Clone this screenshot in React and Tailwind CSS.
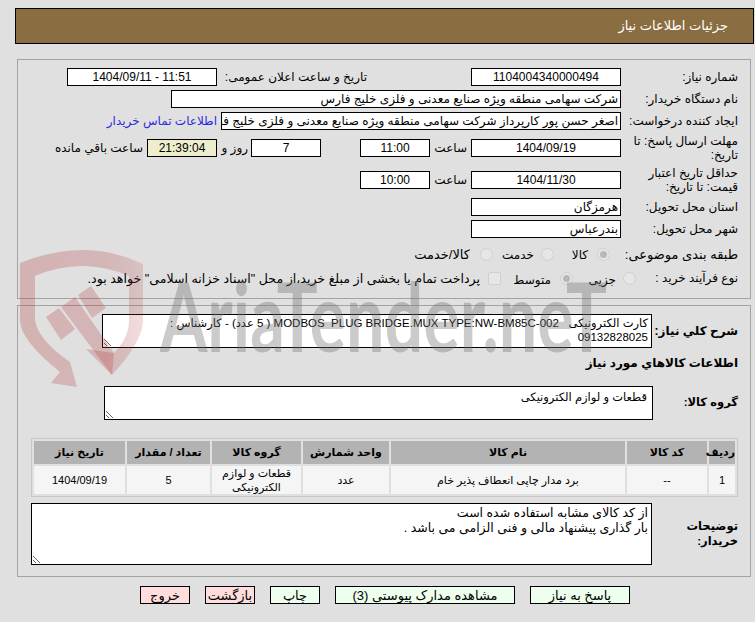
import React from 'react';

const FONT = '[font-family:"Liberation_Sans","DejaVu_Sans",sans-serif]';

function Field({ className = '', bg = 'bg-white', children }) {
  return (
    <div className={`h-[18px] shrink-0 border border-black px-[2px] leading-[16px] whitespace-nowrap overflow-hidden ${bg} ${className}`}>
      {children}
    </div>
  );
}

function Radio({ checked }) {
  return (
    <span className="flex h-[13px] w-[13px] shrink-0 items-center justify-center rounded-full border border-[#cfcfcf] bg-[#e6e6e6]">
      {checked && <span className="h-[7px] w-[7px] rounded-full bg-[#b8b8b8]" />}
    </span>
  );
}

function Row({ label, labelClass = '', className = '', children }) {
  return (
    <div className={`flex h-[18px] items-center ${className}`}>
      <div className={`w-[117px] shrink-0 leading-[14px] ${labelClass}`}>{label}</div>
      {children}
    </div>
  );
}

function Button({ className, width, children }) {
  return (
    <div className={`h-[18px] shrink-0 border border-black text-center text-[13px] leading-[18px] ${width} ${className}`}>
      {children}
    </div>
  );
}

function Watermark() {
  return (
    <svg className="pointer-events-none absolute left-0 top-0" width="755" height="622" viewBox="0 0 755 622">
      <defs>
        <linearGradient id="shield" gradientUnits="userSpaceOnUse" x1="20" y1="0" x2="143" y2="0">
          <stop offset="0" stopColor="#b02f2f" stopOpacity="0.26" />
          <stop offset="0.7" stopColor="#b02f2f" stopOpacity="0.24" />
          <stop offset="1" stopColor="#b02f2f" stopOpacity="0.17" />
        </linearGradient>
      </defs>
      <g fill="url(#shield)">
        <path d="M20 263 Q52 250 83 250 Q114 250 143 264 L143 323 Q140 345 112 375 L86 349 L114 353 Q129 338 129 320 L129 276 Q105 266 83 266 Q58 266 35 276 L35 320 Q38 340 70 362 L77 387 L51 383 L60 372 Q20 340 20 320 Z" />
        <polygon points="46,317 59,308 75,329 61,340" />
        <polygon points="61,307 75,297 114,353 112,375" />
        <polygon points="78,295 91,286 106,308 92,318" />
      </g>
      <text
        x="160"
        y="352"
        fill="#6f6f6f"
        fillOpacity="0.36"
        fontFamily="Lato, sans-serif"
        fontWeight="700"
        fontSize="96"
        textLength="447"
        lengthAdjust="spacingAndGlyphs"
        style={{ direction: 'ltr', unicodeBidi: 'bidi-override' }}
      >
        AriaTender.neT
      </text>
    </svg>
  );
}

export default function App() {
  return (
    <div dir="rtl" className={`relative h-[622px] w-[755px] overflow-hidden bg-[#e0e0e0] pt-2 text-[12px] text-black ${FONT}`}>
      <div className="ml-[15px] mr-[1px] flex h-[36px] items-center border border-black bg-[#8b6d42] pr-[25px] text-[13px] text-white">
        جزئیات اطلاعات نیاز
      </div>

      <div className="ml-[17px] mr-[4px] mt-[15px] h-[240px] border border-[#a3a3a3] pr-[12px] pt-[8px]">
        <Row label="شماره نیاز:">
          <Field className="w-[150px] text-center">1104004340000494</Field>
          <div className="w-[254px] shrink-0 pr-[104px] whitespace-nowrap">تاریخ و ساعت اعلان عمومی:</div>
          <Field className="w-[150px] text-center">11:51 - 1404/09/11</Field>
        </Row>
        <Row label="نام دستگاه خریدار:" className="mt-[4px]">
          <Field className="w-[450px]">شرکت سهامی منطقه ویژه صنایع معدنی و فلزی خلیج فارس</Field>
        </Row>
        <Row label="ایجاد کننده درخواست:" className="mt-[4px]">
          <Field className="w-[400px]">اصغر حسن پور کارپرداز شرکت سهامی منطقه ویژه صنایع معدنی و فلزی خلیج فارس</Field>
          <a className="mr-[4px] whitespace-nowrap text-[#2a2ae0]">اطلاعات تماس خریدار</a>
        </Row>
        <Row label="مهلت ارسال پاسخ: تا تاریخ:" className="mt-[9px]">
          <Field className="w-[150px] text-center">1404/09/19</Field>
          <div className="w-[41px] shrink-0 pr-[4px]">ساعت</div>
          <Field className="w-[70px] text-center">11:00</Field>
          <div className="w-[39px] shrink-0" />
          <Field className="w-[70px] text-center">7</Field>
          <div className="w-[34px] shrink-0 pr-[3px]">روز و</div>
          <Field bg="bg-[#eeeecc]" className="w-[70px] text-center">21:39:04</Field>
          <div className="mr-[4px] whitespace-nowrap">ساعت باقي مانده</div>
        </Row>
        <Row label="حداقل تاریخ اعتبار قیمت: تا تاریخ:" className="mt-[14px]">
          <Field className="w-[150px] text-center">1404/11/30</Field>
          <div className="w-[41px] shrink-0 pr-[4px]">ساعت</div>
          <Field className="w-[70px] text-center">10:00</Field>
        </Row>
        <Row label="استان محل تحویل:" className="mt-[9px]">
          <Field className="w-[150px]">هرمزگان</Field>
        </Row>
        <Row label="شهر محل تحویل:" className="mt-[4px]">
          <Field className="w-[150px]">بندرعباس</Field>
        </Row>
        <Row label="طبقه بندی موضوعی:" labelClass="mt-[2px] whitespace-nowrap text-[13px]" className="mt-[7px]">
          <div className="flex items-center pr-[11px]">
            <Radio checked />
            <span className="mr-[9px] mt-[2px] w-[32px]">کالا</span>
            <span className="mr-[2px]" />
            <Radio />
            <span className="mr-[7px] mt-[2px] w-[39px] whitespace-nowrap">خدمت</span>
            <span className="mr-[2px]" />
            <Radio />
            <span className="mr-[10px] mt-[2px] whitespace-nowrap text-[13px]">کالا/خدمت</span>
          </div>
        </Row>
        <div className="mt-[6px] flex h-[18px] items-center">
          <div className="w-[102px] shrink-0">نوع فرآیند خرید :</div>
          <Radio />
          <span className="mr-[7px] mt-[3px] w-[43px] whitespace-nowrap">جزیی</span>
          <Radio checked />
          <span className="mr-[9px] mt-[3px] w-[50px] whitespace-nowrap">متوسط</span>
          <span className="h-[13px] w-[13px] shrink-0 rounded-[2px] border border-[#cfcfcf] bg-[#e6e6e6]" />
          <span className="mr-[8px] mt-[3px] whitespace-nowrap text-[12.6px]">پرداخت تمام یا بخشی از مبلغ خرید،از محل "اسناد خزانه اسلامی" خواهد بود.</span>
        </div>
      </div>

      <div className="ml-[17px] mr-[4px] mt-[6px] h-[272px] border border-[#a3a3a3] pr-[12px] pt-[8px]">
        <div className="flex items-center">
          <div className="w-[86px] shrink-0 font-bold whitespace-nowrap">شرح كلي نياز:</div>
          <textarea
            readOnly
            dir="rtl"
            className="h-[34px] w-[550px] overflow-hidden border border-black bg-white px-[3px] pt-[1px] text-[11.5px] leading-[14px]"
            defaultValue="کارت الکترونیکی   MODBOS  PLUG BRIDGE.MUX TYPE:NW-BM85C-002 ( 5 عدد) - کارشناس : 09132828025"
          />
        </div>
        <div className="mt-[8px] font-bold leading-[14px]">اطلاعات كالاهاي مورد نياز</div>
        <div className="mt-[16px] flex items-center">
          <div className="w-[85px] shrink-0 text-[11.5px] font-bold">گروه کالا:</div>
          <textarea
            readOnly
            dir="rtl"
            className="h-[34px] w-[549px] overflow-hidden border border-black bg-white px-[5px] pt-[3px] text-[11.5px] leading-[14px]"
            defaultValue="قطعات و لوازم الکترونیکی"
          />
        </div>
        <table className="mt-[18px] w-[707px] table-fixed border-separate border-spacing-[2px] border border-[#c8c8c8] text-center text-[11px]">
          <thead>
            <tr className="h-[23px] bg-[#b3b3b3] font-bold">
              <th className="w-[26px]">ردیف</th>
              <th className="w-[80px]">کد کالا</th>
              <th className="w-[234px]">نام کالا</th>
              <th className="w-[86px]">واحد شمارش</th>
              <th className="w-[89px]">گروه کالا</th>
              <th className="w-[83px]">تعداد / مقدار</th>
              <th>تاریخ نیاز</th>
            </tr>
          </thead>
          <tbody>
            <tr className="h-[28px] bg-[#f5f5f5] leading-[14px]">
              <td>1</td>
              <td>--</td>
              <td>برد مدار چاپی انعطاف پذیر خام</td>
              <td>عدد</td>
              <td>قطعات و لوازم الکترونیکی</td>
              <td>5</td>
              <td>1404/09/19</td>
            </tr>
          </tbody>
        </table>
        <div className="mt-[6px] flex items-center">
          <div className="w-[86px] shrink-0 text-[11.5px] font-bold leading-[15px]">توضیحات خریدار:</div>
          <textarea
            readOnly
            dir="rtl"
            className="h-[62px] w-[621px] overflow-hidden border border-black bg-white px-[3px] pt-[2px] text-[12.5px] leading-[15px]"
            defaultValue={'از کد کالای مشابه استفاده شده است\nبار گذاری پیشنهاد مالی و فنی الزامی می باشد .'}
          />
        </div>
      </div>

      <div className="mt-[9px] flex gap-[15px] pr-[125px]">
        <Button width="w-[100px]" className="bg-[#eeffee]">پاسخ به نیاز</Button>
        <Button width="w-[180px]" className="bg-[#eeffee]">مشاهده مدارک پیوستی (3)</Button>
        <Button width="w-[50px]" className="bg-[#eeffee]">چاپ</Button>
        <Button width="w-[50px]" className="bg-[#ffdddd]">بازگشت</Button>
        <Button width="w-[50px]" className="bg-[#ffdddd]">خروج</Button>
      </div>

      <Watermark />
    </div>
  );
}
